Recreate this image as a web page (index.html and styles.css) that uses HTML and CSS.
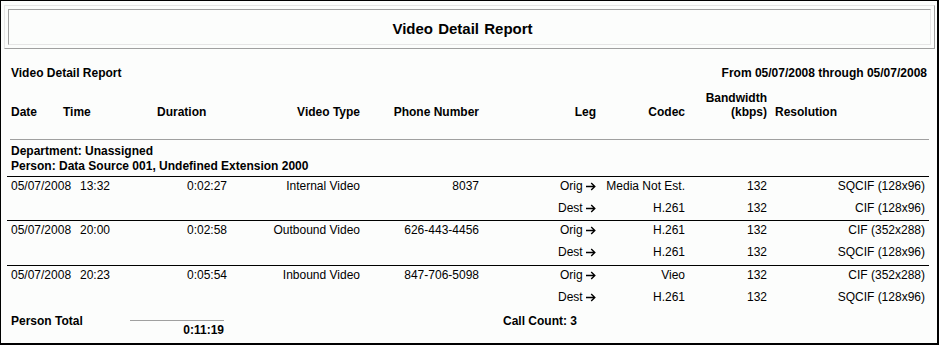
FILE: index.html
```html
<!DOCTYPE html>
<html>
<head>
<meta charset="utf-8">
<link rel="stylesheet" href="styles.css">
</head>
<body>
<div class="page">
  <div class="title-frame">
    <div class="title-inner">Video Detail Report</div>
  </div>

  <div class="subhead">
    <span class="bold">Video Detail Report</span>
    <span class="bold range">From 05/07/2008 through 05/07/2008</span>
  </div>

  <div class="grid header">
    <div>Date</div>
    <div>Time</div>
    <div class="pad-dur">Duration</div>
    <div class="r">Video Type</div>
    <div class="r">Phone Number</div>
    <div class="r">Leg</div>
    <div class="r">Codec</div>
    <div class="r">Bandwidth<br>(kbps)</div>
    <div class="pad-res">Resolution</div>
  </div>

  <div class="rule-gray"></div>

  <div class="group">
    <div class="bold">Department: Unassigned</div>
    <div class="bold">Person: Data Source 001, Undefined Extension 2000</div>
  </div>

  <div class="record">
    <div class="grid rows">
      <div>05/07/2008</div>
      <div class="pad-time">13:32</div>
      <div class="r">0:02:27</div>
      <div class="r">Internal Video</div>
      <div class="r">8037</div>
      <div class="r">Orig <svg class="arrow" viewBox="0 0 10 9" width="10" height="9"><path d="M0 4.5H9M5.2 1L8.8 4.5L5.2 8"/></svg></div>
      <div class="r">Media Not Est.</div>
      <div class="r">132</div>
      <div class="r">SQCIF (128x96)</div>

      <div></div><div></div><div></div><div></div><div></div>
      <div class="r">Dest <svg class="arrow" viewBox="0 0 10 9" width="10" height="9"><path d="M0 4.5H9M5.2 1L8.8 4.5L5.2 8"/></svg></div>
      <div class="r">H.261</div>
      <div class="r">132</div>
      <div class="r">CIF (128x96)</div>
    </div>
  </div>

  <div class="record">
    <div class="grid rows">
      <div>05/07/2008</div>
      <div class="pad-time">20:00</div>
      <div class="r">0:02:58</div>
      <div class="r">Outbound Video</div>
      <div class="r">626-443-4456</div>
      <div class="r">Orig <svg class="arrow" viewBox="0 0 10 9" width="10" height="9"><path d="M0 4.5H9M5.2 1L8.8 4.5L5.2 8"/></svg></div>
      <div class="r">H.261</div>
      <div class="r">132</div>
      <div class="r">CIF (352x288)</div>

      <div></div><div></div><div></div><div></div><div></div>
      <div class="r">Dest <svg class="arrow" viewBox="0 0 10 9" width="10" height="9"><path d="M0 4.5H9M5.2 1L8.8 4.5L5.2 8"/></svg></div>
      <div class="r">H.261</div>
      <div class="r">132</div>
      <div class="r">SQCIF (128x96)</div>
    </div>
  </div>

  <div class="record">
    <div class="grid rows">
      <div>05/07/2008</div>
      <div class="pad-time">20:23</div>
      <div class="r">0:05:54</div>
      <div class="r">Inbound Video</div>
      <div class="r">847-706-5098</div>
      <div class="r">Orig <svg class="arrow" viewBox="0 0 10 9" width="10" height="9"><path d="M0 4.5H9M5.2 1L8.8 4.5L5.2 8"/></svg></div>
      <div class="r">Vieo</div>
      <div class="r">132</div>
      <div class="r">CIF (352x288)</div>

      <div></div><div></div><div></div><div></div><div></div>
      <div class="r">Dest <svg class="arrow" viewBox="0 0 10 9" width="10" height="9"><path d="M0 4.5H9M5.2 1L8.8 4.5L5.2 8"/></svg></div>
      <div class="r">H.261</div>
      <div class="r">132</div>
      <div class="r">SQCIF (128x96)</div>
    </div>
  </div>

  <div class="grid totals">
    <div class="bold span2">Person Total</div>
    <div class="bold r total-val">0:11:19</div>
    <div></div>
    <div></div>
    <div class="bold span3 call-count">Call Count: 3</div>
  </div>
</div>
</body>
</html>
```

FILE: styles.css
```css
* { box-sizing: border-box; }

html, body {
  margin: 0;
  padding: 0;
  background: #fcfdfc;
}

body {
  font-family: "Liberation Sans", Arial, sans-serif;
  font-size: 12px;
  color: #000;
}

.page {
  width: 939px;
  height: 345px;
  border-top: 1px solid #000;
  border-left: 1px solid #000;
  border-right: 2px solid #000;
  border-bottom: 2px solid #000;
  padding: 0 8px 0 10px;
  background: #fcfdfc;
  overflow: hidden;
}

.bold { font-weight: bold; }
.r { text-align: right; }

.title-frame {
  width: 931px;
  margin: 4px 0 0 -7px;
  padding: 3px;
  border-top: 1px solid #e6e6e6;
  border-left: 1px solid #e6e6e6;
  border-right: 1px solid #a0a0a0;
  border-bottom: 1px solid #a0a0a0;
}

.title-inner {
  height: 36px;
  padding: 10px 14px 6px 0;
  border-top: 1px solid #a0a0a0;
  border-left: 1px solid #a0a0a0;
  border-right: 1px solid #e6e6e6;
  border-bottom: 1px solid #e6e6e6;
  text-align: center;
  font-size: 15px;
  font-weight: bold;
  line-height: 18px;
  word-spacing: 1px;
}

.subhead {
  display: flex;
  justify-content: space-between;
  margin-top: 16px;
  line-height: 16px;
}

.range { margin-right: 2px; }

.grid {
  display: grid;
  grid-template-columns: 52px 67px 97px 133px 119px 117px 89px 82px 158px;
}

.header {
  margin-top: 10px;
  font-weight: bold;
  line-height: 14px;
  align-items: end;
}

.pad-dur { padding-left: 27px; }
.pad-res { padding-left: 8px; }
.pad-time { padding-left: 17px; }

.rule-gray {
  margin: 20px 0 0 -1px;
  height: 1px;
  background: #a0a0a0;
}

.group {
  margin-top: 4px;
  line-height: 15px;
}

.record {
  margin-left: -4px;
  padding-left: 4px;
  border-top: 1px solid #000;
  padding-top: 1px;
  padding-bottom: 4px;
}

.record + .record + .record { margin-top: 1px; }

.group + .record { margin-top: 2px; }

.rows {
  line-height: 16px;
  row-gap: 6px;
}

.arrow {
  vertical-align: -1px;
  margin-left: 0;
  fill: none;
  stroke: #000;
  stroke-width: 1.4;
}

.totals {
  margin-top: 4px;
  line-height: 16px;
}

.span2 { grid-column: span 2; }
.span3 { grid-column: span 3; }

.total-val {
  margin-top: 7px;
  margin-right: 3px;
  padding-top: 1px;
  border-top: 1px solid #a0a0a0;
}

.call-count { padding-left: 24px; }
```
